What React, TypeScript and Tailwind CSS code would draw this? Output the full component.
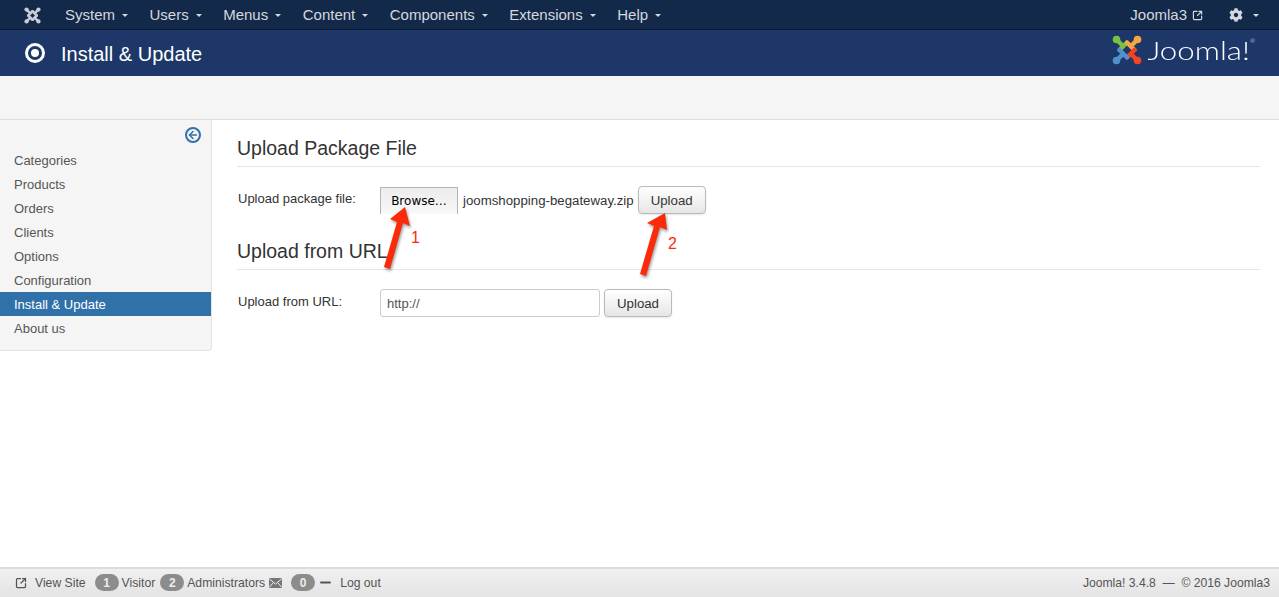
import { ArrowLeft, Minus, SquareArrowOutUpRight } from "lucide-react";
import { FaCog } from "react-icons/fa";

const menus = ["System", "Users", "Menus", "Content", "Components", "Extensions", "Help"];

const sideLinks = [
  "Categories",
  "Products",
  "Orders",
  "Clients",
  "Options",
  "Configuration",
  "Install & Update",
  "About us",
];

function Caret() {
  return <span className="ml-[7px] inline-block size-0 border-x-[3px] border-t-[3px] border-x-transparent border-t-[#d5d8de]" />;
}

function JoomlaMark({ size, colored }: { size: number; colored?: boolean }) {
  const c = colored
    ? { green: "#7ac143", orange: "#f9a541", red: "#f44321", blue: "#5091cd" }
    : { green: "#c9ccd2", orange: "#c9ccd2", red: "#c9ccd2", blue: "#c9ccd2" };
  return (
    <svg width={size} height={size} viewBox="0 0 30 30" fill="none">
      <g strokeWidth="4.4" strokeLinecap="round">
        <path d="M4.5 4.5 L11 11 M15 7.5 L7.5 15" stroke={c.green} />
        <path d="M25.5 4.5 L19 11 M15 7.5 L22.5 15" stroke={c.orange} />
        <path d="M25.5 25.5 L19 19 M22.5 15 L15 22.5" stroke={c.red} />
        <path d="M4.5 25.5 L11 19 M15 22.5 L7.5 15" stroke={c.blue} />
      </g>
      <circle cx="4.5" cy="4.5" r="3.8" fill={c.green} />
      <circle cx="25.5" cy="4.5" r="3.8" fill={c.orange} />
      <circle cx="25.5" cy="25.5" r="3.8" fill={c.red} />
      <circle cx="4.5" cy="25.5" r="3.8" fill={c.blue} />
    </svg>
  );
}

function Badge({ n }: { n: number }) {
  return (
    <span className="flex h-[17px] w-6 items-center justify-center rounded-full bg-[#8c8c8c] text-[12px] font-bold text-[#eee]">
      {n}
    </span>
  );
}

function UploadButton() {
  return (
    <button
      type="button"
      className="h-7 w-[68px] rounded-[4px] border border-[#b9b9b9] bg-gradient-to-b from-white to-[#e6e6e6] pt-[1px] text-[13.25px] text-[#333] shadow-[0_1px_2px_rgba(0,0,0,0.1)]"
    >
      Upload
    </button>
  );
}

function Arrows() {
  return (
    <svg className="pointer-events-none absolute left-[370px] top-[205px]" width="320" height="80" viewBox="0 0 320 80" fill="none">
      <g fill="#fb2a0a" style={{ filter: "drop-shadow(1px 2px 1.5px rgba(0,0,0,0.4))" }}>
        <path d="M14 62 L27 17 L20 14 L35 2 L40 21 L33 18 L20 64 Z" />
        <path d="M270 69 L284 21 L277 18 L295 8 L297 25 L290 22 L276 71 Z" />
      </g>
      <text x="41" y="38" fontSize="16" fill="#fb2a0a">1</text>
      <text x="298" y="44" fontSize="16" fill="#fb2a0a">2</text>
    </svg>
  );
}

export default function App() {
  return (
    <div className="relative flex h-screen flex-col overflow-hidden bg-white font-['Liberation_Sans',Arial,sans-serif] text-[13px] text-[#333]">
      <nav className="flex h-[30px] shrink-0 items-center justify-between border-b border-[#0c1a33] bg-[#13294a] pl-6 pr-[20px] pt-[1px] text-[15px] text-[#d5d8de]">
        <div className="flex items-center">
          <JoomlaMark size={17} />
          <ul className="ml-[24px] flex gap-[21.5px]">
            {menus.map((m) => (
              <li key={m} className="flex items-center">
                {m}
                <Caret />
              </li>
            ))}
          </ul>
        </div>
        <div className="flex items-center">
          <span>Joomla3</span>
          <SquareArrowOutUpRight className="ml-[5px] size-[11px]" strokeWidth={2.5} />
          <FaCog className="ml-[26px] size-[14px]" />
          <span className="ml-[3px] flex items-center">
            <Caret />
          </span>
        </div>
      </nav>

      <header className="flex h-[46px] shrink-0 items-center justify-between bg-[#1c3768] pl-[25px] pr-6 text-white">
        <div className="flex items-center gap-[16px]">
          <span className="flex size-[20px] items-center justify-center rounded-full border-[3px] border-white">
            <span className="size-[8px] rounded-full bg-white" />
          </span>
          <h1 className="mt-[2px] text-[20px] leading-none">Install &amp; Update</h1>
        </div>
        <div className="-mt-[6px] flex items-center gap-[26px]">
          <JoomlaMark size={30} colored />
          <span className="flex items-start font-['Lato',sans-serif] text-[25px] font-light leading-none">
            <span className="origin-right scale-x-[1.25]">Joomla!</span>
            <span className="text-[6px]">®</span>
          </span>
        </div>
      </header>

      <div className="h-[44px] shrink-0 border-b border-[#dedede] bg-[#f5f5f5]" />

      <main className="flex min-h-0 flex-1">
        <aside className="h-[231px] w-[212px] shrink-0 rounded-br-[4px] border-b border-r border-[#e3e3e3] bg-[#f5f5f5]">
          <div className="flex h-[23px] items-end justify-end pr-[10px]">
            <span className="flex size-4 items-center justify-center rounded-full border-2 border-[#3071a9] text-[#3071a9]">
              <ArrowLeft className="size-3" strokeWidth={3} />
            </span>
          </div>
          <ul className="mt-[5px]">
            {sideLinks.map((s) => (
              <li
                key={s}
                className={
                  s === "Install & Update"
                    ? "flex h-6 items-center bg-[#3071a9] pl-[14px] pt-[2px] text-white"
                    : "flex h-6 items-center pl-[14px] pt-[2px] text-[#555]"
                }
              >
                {s}
              </li>
            ))}
          </ul>
        </aside>

        <section className="flex-1 pl-[25px] pr-[19px] pt-[18px]">
          <h2 className="border-b border-[#e5e5e5] pb-[7px] text-[19.5px] leading-[21px] text-[#333]">Upload Package File</h2>
          <div className="mt-[19px] flex h-7 items-center">
            <label className="mb-[2px] w-[143px] pl-[1px]">Upload package file:</label>
            <span className="flex h-[27px] w-[78px] items-center justify-center border-x border-t border-[#b5b5b5] bg-gradient-to-b from-[#ececec] to-[#f8f8f8] font-['DejaVu_Sans',sans-serif] text-[12px] text-black">
              Browse…
            </span>
            <span className="ml-[5px] mr-1 mt-[2px] text-[13.25px]">joomshopping-begateway.zip</span>
            <UploadButton />
          </div>
          <h2 className="mt-[27px] border-b border-[#e5e5e5] pb-[7px] text-[19.5px] leading-[21px] text-[#333]">Upload from URL</h2>
          <div className="mt-[19px] flex h-7 items-center">
            <label className="mb-[2px] w-[143px] pl-[1px]">Upload from URL:</label>
            <input
              readOnly
              value="http://"
              className="h-7 w-[220px] rounded-[3px] border border-[#ccc] bg-white px-[6px] text-[13px] text-[#555]"
            />
            <span className="ml-1">
              <UploadButton />
            </span>
          </div>
        </section>
      </main>

      <footer className="flex h-[30px] shrink-0 items-center justify-between border-t-2 border-[#dcdcdc] bg-gradient-to-b from-[#f0f0f0] to-[#e4e4e4] pl-[15px] pr-[9px] text-[12.2px] text-[#555]">
        <div className="flex items-center">
          <SquareArrowOutUpRight className="size-[12px]" strokeWidth={2.5} />
          <span className="ml-2">View Site</span>
          <span className="ml-[9px]"><Badge n={1} /></span>
          <span className="ml-[3px]">Visitor</span>
          <span className="ml-[5px]"><Badge n={2} /></span>
          <span className="ml-[3px]">Administrators</span>
          <svg className="ml-[4px]" width="13" height="10" viewBox="0 0 13 10">
            <rect width="13" height="10" rx="1" fill="#777" />
            <path d="M0.5 1 L6.5 6 L12.5 1 M0.5 9 L4.5 4.5 M12.5 9 L8.5 4.5" stroke="#eee" strokeWidth="1" fill="none" />
          </svg>
          <span className="ml-[9px]"><Badge n={0} /></span>
          <Minus className="ml-[3px] size-[15px]" strokeWidth={3.5} />
          <span className="ml-[7px]">Log out</span>
        </div>
        <span className="text-[12.15px]">Joomla! 3.4.8 &nbsp;—&nbsp; © 2016 Joomla3</span>
      </footer>

      <Arrows />
    </div>
  );
}
